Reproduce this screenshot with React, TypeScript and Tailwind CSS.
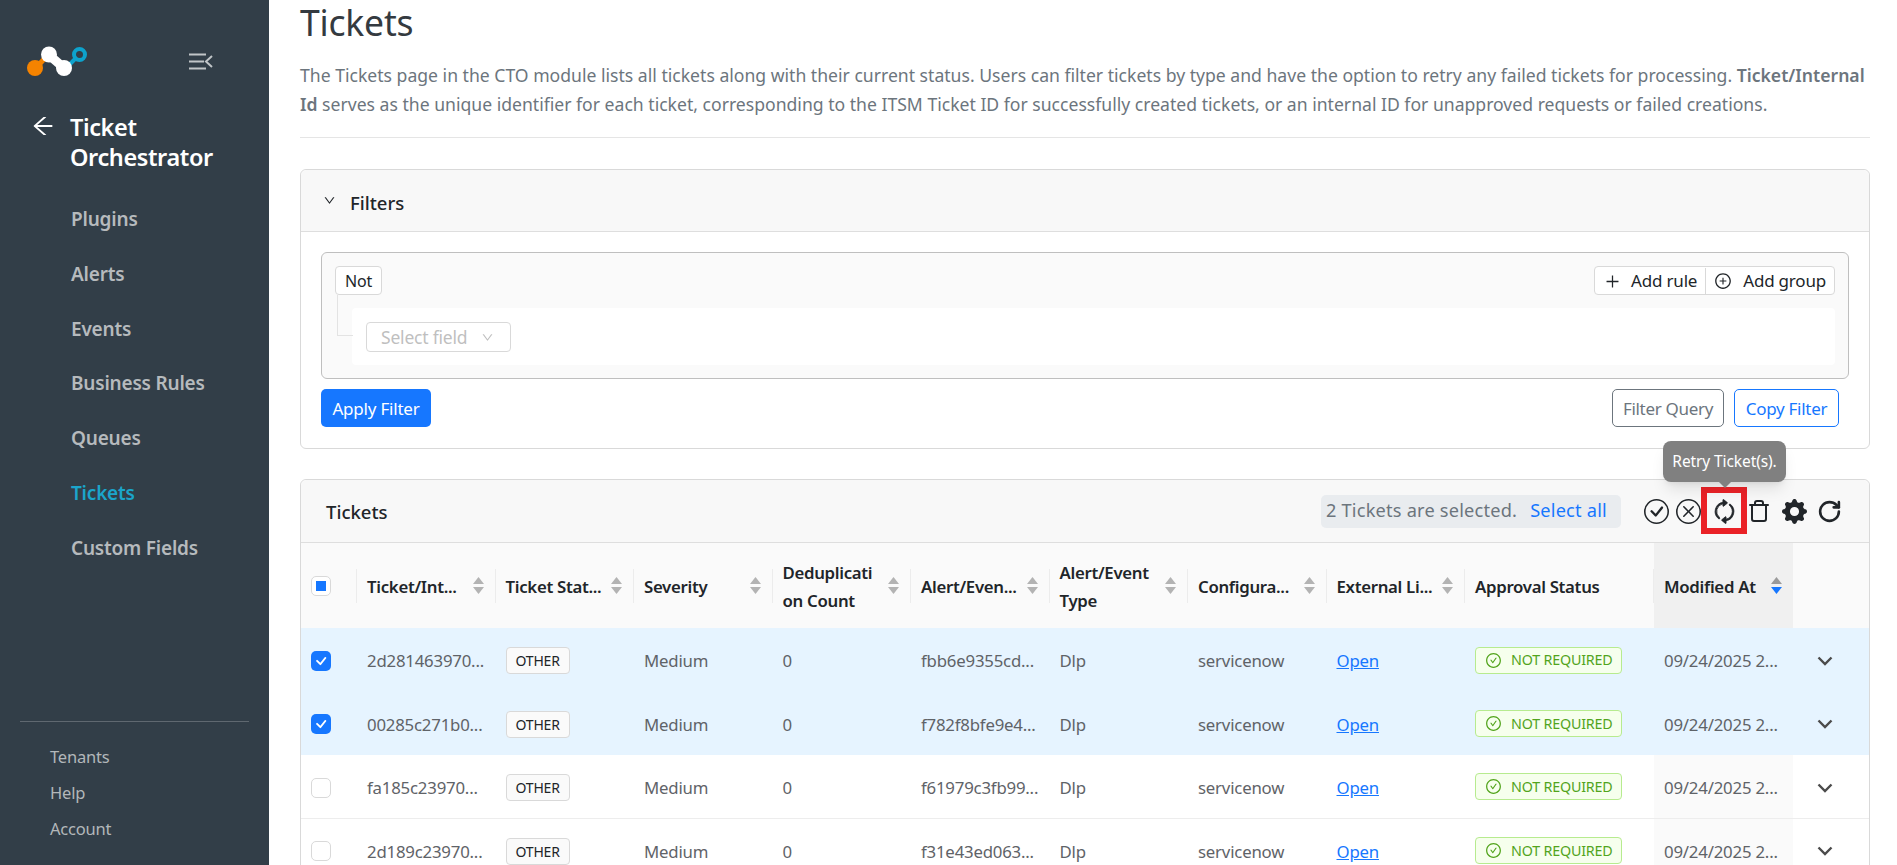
import React from 'react';
import { AiOutlineArrowLeft, AiOutlineCheckCircle, AiOutlineDown, AiOutlinePlus, AiOutlinePlusCircle } from 'react-icons/ai';
import { BsArrowRepeat, BsCheck, BsCheckCircle, BsGearFill, BsXCircle } from 'react-icons/bs';
import { RotateCw, Trash } from 'lucide-react';

const navItems = ['Plugins', 'Alerts', 'Events', 'Business Rules', 'Queues', 'Tickets', 'Custom Fields'];

const rows = [
  { id: '2d281463970...', alert: 'fbb6e9355cd...', selected: true },
  { id: '00285c271b0...', alert: 'f782f8bfe9e4...', selected: true },
  { id: 'fa185c23970...', alert: 'f61979c3fb99...', selected: false },
  { id: '2d189c23970...', alert: 'f31e43ed063...', selected: false },
];

const headers = ['Ticket/Int...', 'Ticket Stat...', 'Severity', 'Deduplicati\non Count', 'Alert/Even...', 'Alert/Event\nType', 'Configura...', 'External Li...'];

function Logo() {
  return (
    <svg width="62" height="32" viewBox="0 0 62 32" fill="none">
      <path d="M9 23 L18 13" stroke="#f58300" strokeWidth="5" />
      <circle cx="8" cy="23" r="8" fill="#f58300" />
      <path d="M42 20 L50 12" stroke="#0da2cc" strokeWidth="4" />
      <circle cx="52.5" cy="9.5" r="5.5" stroke="#0da2cc" strokeWidth="4" />
      <path d="M22 10 L37 23" stroke="#fff" strokeWidth="9" />
      <circle cx="22" cy="9.5" r="8" fill="#fff" />
      <circle cx="37" cy="23" r="8" fill="#fff" />
    </svg>
  );
}

function CollapseIcon() {
  return (
    <svg width="24" height="17" viewBox="0 0 24 17" fill="none">
      <path d="M0 1.5 H17 M0 8.5 H15 M0 15.5 H17" stroke="#c1c5c8" strokeWidth="2.2" />
      <path d="M23 3 L17 8.5 L23 14" stroke="#c1c5c8" strokeWidth="2" />
    </svg>
  );
}

function SortCaret({ active }: { active?: boolean }) {
  return (
    <span className="flex flex-col gap-[3px] shrink-0">
      <svg width="11" height="7" viewBox="0 0 11 7"><path d="M5.5 0 L11 7 H0 Z" fill={active ? '#9a9a9a' : '#b3b3b3'} /></svg>
      <svg width="11" height="7" viewBox="0 0 11 7"><path d="M5.5 7 L11 0 H0 Z" fill={active ? '#1677ff' : '#b3b3b3'} /></svg>
    </span>
  );
}

function HeaderCell({ label, caret = true, active }: { label: string; caret?: boolean; active?: boolean }) {
  return (
    <th className={`p-0 font-semibold text-left ${active ? 'bg-[#f0f0f0]' : ''}`}>
      <div className={`flex items-center justify-between h-[34px] pl-[10px] pr-[11px] ${active ? '' : 'border-r border-[#ececec]'}`}>
        <span className="pt-[2px] leading-[28px] whitespace-pre-line">{label}</span>
        {caret && <SortCaret active={active} />}
      </div>
    </th>
  );
}

function Checkbox({ checked }: { checked: boolean }) {
  return (
    <span className={`flex items-center justify-center w-[20px] h-[20px] rounded-[5px] ${checked ? 'bg-[#1677ff]' : 'bg-white border border-[#d9d9d9]'}`}>
      {checked && <BsCheck className="text-white text-[24px]" />}
    </span>
  );
}

export default function App() {
  return (
    <div className="flex h-[865px] overflow-hidden bg-white text-[17px] text-[#212529] font-['Noto_Sans',sans-serif]">
      {/* Sidebar */}
      <aside className="w-[269px] shrink-0 flex flex-col bg-[#323e48]">
        <div className="flex items-center justify-between pl-[27px] pr-[56px] pt-[45px]">
          <Logo />
          <CollapseIcon />
        </div>
        <div className="flex mt-[35px] pl-[30px] text-white">
          <AiOutlineArrowLeft className="text-[26px] mt-[1px] shrink-0" />
          <h2 className="ml-[14px] text-[23.5px] leading-[30px] font-semibold tracking-[-0.4px]">Ticket<br />Orchestrator</h2>
        </div>
        <nav className="flex flex-col gap-[28.8px] mt-[34px] pl-[71px]">
          {navItems.map((item) => (
            <a key={item} className={`text-[19px] leading-[26px] font-semibold tracking-[-0.2px] ${item === 'Tickets' ? 'text-[#1ba5cb]' : 'text-[#b6babd]'}`}>{item}</a>
          ))}
        </nav>
        <div className="mt-auto mx-[20px] border-t border-[#5f6870]" />
        <div className="flex flex-col gap-[12px] pl-[50px] pt-[23px] pb-[24px] text-[16.5px] leading-[24px] text-[#b3b7ba] tracking-[-0.2px]">
          <a>Tenants</a>
          <a>Help</a>
          <a>Account</a>
        </div>
      </aside>

      {/* Main */}
      <main className="flex-1 min-w-0 pl-[31px] pr-[27px]">
        <h1 className="text-[35.5px] leading-[44px] text-[#343a40] tracking-[-0.2px]">Tickets</h1>
        <p className="mt-[17px] pb-[18px] border-b border-[#e5e5e5] text-[17.6px] leading-[29px] text-[#6c757d]">
          The Tickets page in the CTO module lists all tickets along with their current status. Users can filter tickets by type and have the option to retry any failed tickets for processing. <b className="font-semibold">Ticket/Internal Id</b> serves as the unique identifier for each ticket, corresponding to the ITSM Ticket ID for successfully created tickets, or an internal ID for unapproved requests or failed creations.
        </p>

        {/* Filters */}
        <section className="mt-[31px] h-[280px] border border-[#d9d9d9] rounded-[6px] bg-white">
          <div className="flex items-center h-[62px] pl-[22px] bg-[#f8f8f8] border-b border-[#dedede] rounded-t-[6px]">
            <AiOutlineDown className="text-[13px] mr-[14px]" />
            <span className="pt-[4px] text-[18.5px] font-medium">Filters</span>
          </div>
          <div className="px-[20px] pt-[20px]">
            <div className="relative h-[127px] border border-[#bfbfbf] rounded-[6px] bg-[#fafafa] px-[13px] pt-[13px]">
              <div className="flex items-center justify-between">
                <button className="h-[29px] px-[9px] pt-[1px] bg-white border border-[#d9d9d9] rounded-[4px] text-[16px] tracking-[-0.2px]">Not</button>
                <div className="flex h-[29px] pt-[1px] bg-white border border-[#d9d9d9] rounded-[4px] text-[17px] tracking-[-0.2px]">
                  <span className="flex items-center gap-[10px] pl-[9px] pr-[8px] border-r border-[#d9d9d9]"><AiOutlinePlus className="text-[17px]" />Add rule</span>
                  <span className="flex items-center gap-[11px] pl-[8px] pr-[8px]"><AiOutlinePlusCircle className="text-[18px]" />Add group</span>
                </div>
              </div>
              <div className="absolute left-[15px] top-[42px] w-[16px] h-[41px] border-l border-b border-[#e3e3e3]" />
              <div className="ml-[17px] mt-[13px] h-[57px] bg-white rounded-[4px] flex items-center pl-[14px]">
                <span className="flex items-center w-[145px] h-[30px] pt-[1px] border border-[#d9d9d9] rounded-[4px] pl-[14px] text-[17.5px] text-[#bfbfbf] tracking-[-0.2px]">
                  Select field
                  <AiOutlineDown className="text-[13px] ml-[14px]" />
                </span>
              </div>
            </div>
            <div className="flex items-center justify-between mt-[10px] pr-[10px]">
              <button className="h-[38px] w-[110px] pt-[1px] bg-[#1677ff] text-white rounded-[5px] text-[17px] tracking-[-0.2px]">Apply Filter</button>
              <div className="flex gap-[10px]">
                <button className="h-[38px] w-[112px] pt-[1px] border border-[#6c757d] text-[#6c757d] rounded-[5px] text-[17px] tracking-[-0.3px]">Filter Query</button>
                <button className="h-[38px] w-[105px] pt-[1px] border border-[#1677ff] text-[#1677ff] rounded-[5px] text-[17px] tracking-[-0.3px]">Copy Filter</button>
              </div>
            </div>
          </div>
        </section>

        {/* Tickets table */}
        <section className="relative mt-[30px] border border-[#d9d9d9] rounded-t-[6px]">
          <div className="flex items-center h-[63px] pl-[25px] bg-[#f8f8f8] border-b border-[#dedede] rounded-t-[6px]">
            <span className="pt-[2px] text-[18.5px] font-medium">Tickets</span>
            <div className="ml-auto flex items-center gap-[13px] h-[33px] w-[300px] pl-[5px] bg-[#e9ecef] rounded-[5px] text-[18.2px] text-[#6c757d] tracking-[0.2px]">
              <span>2 Tickets are selected.</span>
              <a className="text-[#1677ff]">Select all</a>
            </div>
            <div className="flex items-center w-[248px] pl-[23px] text-[#212529]">
              <BsCheckCircle className="text-[25px] mr-[7px]" />
              <BsXCircle className="text-[25px] mr-[11px]" />
              <BsArrowRepeat className="text-[25px] mr-[10px] rotate-90 stroke-current stroke-[0.5px]" />
              <Trash size={24} strokeWidth={2} className="mr-[11px]" />
              <BsGearFill className="text-[25px] mr-[10px]" />
              <RotateCw size={25} strokeWidth={2.5} />
            </div>
          </div>

          {/* Annotation and tooltip */}
          <div className="absolute left-[1400px] top-[7px] w-[46px] h-[47px] border-[6px] border-[#ea2227]" />
          <div className="absolute left-[1362px] top-[-39px] flex items-center justify-center w-[123px] h-[41px] rounded-[8px] bg-[#808080] text-white text-[15.5px] tracking-[-0.1px] shadow-lg">
            Retry Ticket(s).
            <span className="absolute left-1/2 -translate-x-1/2 -bottom-[6px] w-0 h-0 border-x-[7px] border-x-transparent border-t-[7px] border-t-[#808080]" />
          </div>

          <table className="w-full table-fixed border-collapse">
            <colgroup>
              <col className="w-[56px]" />
              {headers.map((h) => <col key={h} className="w-[138.5px]" />)}
              <col className="w-[189px]" />
              <col className="w-[139px]" />
              <col />
            </colgroup>
            <thead>
              <tr className="h-[85px] bg-[#fafafa] text-[16.8px] tracking-[-0.3px]">
                <th className="p-0">
                  <div className="flex items-center pl-[10px] h-[34px] border-r border-[#ececec]">
                    <span className="flex items-center justify-center w-[20px] h-[20px] bg-white border border-[#d9d9d9] rounded-[5px]">
                      <span className="w-[10px] h-[10px] bg-[#1677ff]" />
                    </span>
                  </div>
                </th>
                {headers.map((h) => <HeaderCell key={h} label={h} />)}
                <HeaderCell label="Approval Status" caret={false} />
                <HeaderCell label="Modified At" active />
                <th className="p-0" />
              </tr>
            </thead>
            <tbody className="text-[16.8px] text-[#5f6368] tracking-[-0.2px]">
              {rows.map((row) => (
                <tr key={row.id} className={`h-[63.5px] ${row.selected ? 'bg-[#e6f4ff]' : 'border-b border-[#ededed]'}`}>
                  <td className="p-0 pl-[10px] pt-[2px]"><Checkbox checked={row.selected} /></td>
                  <td className="pl-[10px] pt-[2px]">{row.id}</td>
                  <td className="pl-[10px] pt-[2px]">
                    <span className="inline-flex items-center h-[27px] px-[9px] bg-[#fafafa] border border-[#d9d9d9] rounded-[4px] text-[14px] text-[#212529]">OTHER</span>
                  </td>
                  <td className="pl-[10px] pt-[2px]">Medium</td>
                  <td className="pl-[10px] pt-[2px]">0</td>
                  <td className="pl-[10px] pt-[2px]">{row.alert}</td>
                  <td className="pl-[10px] pt-[2px]">Dlp</td>
                  <td className="pl-[10px] pt-[2px]">servicenow</td>
                  <td className="pl-[10px] pt-[2px]"><a className="text-[#1677ff] underline">Open</a></td>
                  <td className="pl-[10px] pt-[2px]">
                    <span className="inline-flex items-center gap-[9px] h-[27px] px-[9px] bg-[#f6ffed] border border-[#b7eb8f] rounded-[4px] text-[14.3px] font-normal text-[#52a41c]">
                      <AiOutlineCheckCircle className="text-[17px]" />NOT REQUIRED
                    </span>
                  </td>
                  <td className={`pl-[10px] pt-[2px] ${row.selected ? '' : 'bg-[#fafafa]'}`}>09/24/2025 2...</td>
                  <td className="pl-[24px] pt-[2px]">
                    <svg width="16" height="10" viewBox="0 0 16 10" fill="none"><path d="M1.5 1.5 L8 8 L14.5 1.5" stroke="#4b4b4b" strokeWidth="2.4" /></svg>
                  </td>
                </tr>
              ))}
            </tbody>
          </table>
        </section>
      </main>
    </div>
  );
}
